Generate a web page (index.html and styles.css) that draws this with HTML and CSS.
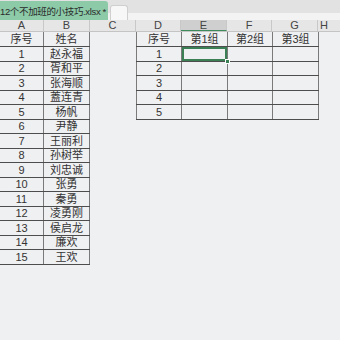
FILE: index.html
```
<!DOCTYPE html>
<html lang="zh">
<head>
<meta charset="utf-8">
<link rel="stylesheet" href="styles.css">
</head>
<body>
<div class="tabbar">
  <div class="tab active"><span class="tabname">12个不加班的小技巧.xlsx *</span><span class="close">×</span></div>
  <div class="tab blank"></div>
</div>
<div class="colheads">
  <div class="ch w44">A</div>
  <div class="ch w46">B</div>
  <div class="ch w46">C</div>
  <div class="ch w45">D</div>
  <div class="ch w46 sel">E</div>
  <div class="ch w45">F</div>
  <div class="ch w46">G</div>
  <div class="ch rest">H</div>
</div>
<div class="sheet">
  <table class="grid left">
    <colgroup><col class="w44"><col class="w46"></colgroup>
    <tr><td>序号</td><td>姓名</td></tr>
    <tr><td>1</td><td>赵永福</td></tr>
    <tr><td>2</td><td>胥和平</td></tr>
    <tr><td>3</td><td>张海顺</td></tr>
    <tr><td>4</td><td>蓋连青</td></tr>
    <tr><td>5</td><td>杨帆</td></tr>
    <tr><td>6</td><td>尹静</td></tr>
    <tr><td>7</td><td>王丽利</td></tr>
    <tr><td>8</td><td>孙树举</td></tr>
    <tr><td>9</td><td>刘忠诚</td></tr>
    <tr><td>10</td><td>张勇</td></tr>
    <tr><td>11</td><td>秦勇</td></tr>
    <tr><td>12</td><td>凌勇刚</td></tr>
    <tr><td>13</td><td>侯启龙</td></tr>
    <tr><td>14</td><td>廉欢</td></tr>
    <tr><td>15</td><td>王欢</td></tr>
  </table>
  <table class="grid right">
    <colgroup><col class="w45"><col class="w46"><col class="w45"><col class="w46"></colgroup>
    <tr><td>序号</td><td>第1组</td><td>第2组</td><td>第3组</td></tr>
    <tr><td>1</td><td class="active-cell"><span class="handle"></span></td><td></td><td></td></tr>
    <tr><td>2</td><td></td><td></td><td></td></tr>
    <tr><td>3</td><td></td><td></td><td></td></tr>
    <tr><td>4</td><td></td><td></td><td></td></tr>
    <tr><td>5</td><td></td><td></td><td></td></tr>
  </table>
</div>
</body>
</html>
```
FILE: styles.css
```
* { box-sizing: border-box; }
html, body { margin: 0; padding: 0; }
body {
  width: 340px;
  height: 340px;
  overflow: hidden;
  background: #eff0f2;
  font-family: "Liberation Sans", "Noto Sans CJK SC", sans-serif;
  color: #333;
}
.tabbar {
  height: 20px;
  display: flex;
  align-items: flex-end;
  gap: 2px;
  background: linear-gradient(#e2e2e2 0, #e2e2e2 13px, #f3f3f3 13px);
}
.tab {
  height: 19px;
  border-radius: 0 3px 0 0;
}
.tab.active {
  flex: none;
  width: 108px;
  background: #8ccaa8;
  display: flex;
  align-items: center;
  font-size: 9.5px;
  color: #2b2b2b;
}
.tabname {
  margin-left: 0;
  white-space: nowrap;
  letter-spacing: -0.35px;
}
.close {
  margin-left: 4px;
  color: #6f9e86;
  font-size: 10px;
}
.tab.blank {
  width: 18px;
  height: 15px;
  background: #f7f7f7;
  border: 1px solid #cfcfcf;
  border-bottom: none;
  border-radius: 3px 3px 0 0;
}
.colheads {
  display: flex;
  height: 12px;
  background: #e6e6e6;
  border-bottom: 1px solid #c4c4c4;
}
.ch {
  flex: none;
  border-right: 1px solid #c8c8c8;
  font-size: 11px;
  line-height: 11px;
  text-align: center;
  color: #444;
}
.ch.sel {
  background: #cfcfcf;
  border-bottom: 1px solid #3d8a5c;
}
.ch.rest { flex: 1; text-align: left; padding-left: 2px; border-right: none; }
.w44 { width: 44px; }
.w45 { width: 45px; }
.w46 { width: 46px; }
.sheet {
  display: flex;
  align-items: flex-start;
  gap: 46px;
}
.grid {
  border-collapse: collapse;
  table-layout: fixed;
  font-size: 11px;
  color: #333;
}
.grid.left { width: 90px; margin-left: -1px; }
.grid.right { width: 183px; }
.grid td {
  height: 14.5px;
  padding: 0;
  text-align: center;
  line-height: 12px;
  border: 1px solid #4d4d4d;
  border-left-color: #7a7a7a;
  border-right-color: #7a7a7a;
  white-space: nowrap;
}
.grid.left tr:first-child td, .grid.right tr:first-child td { border-top: none; }
.active-cell {
  position: relative;
  box-shadow: inset 0 0 0 2px #3b7f54;
}
.handle {
  position: absolute;
  right: -3px;
  bottom: -3px;
  width: 5px;
  height: 5px;
  background: #3b7f54;
  border: 1px solid #fff;
}
```
